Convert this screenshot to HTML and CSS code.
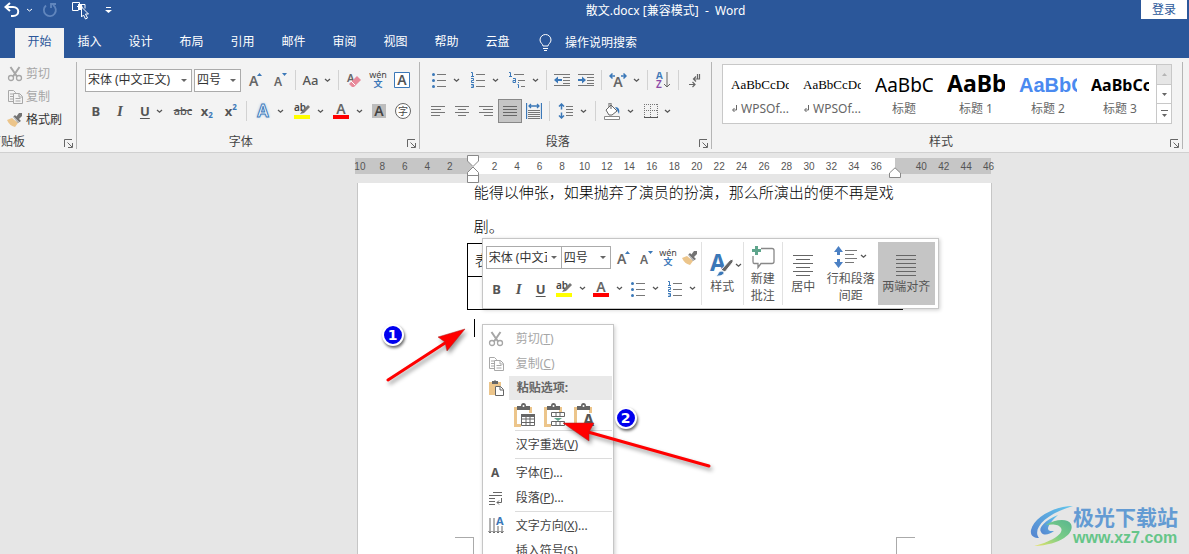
FILE: index.html
```
<!DOCTYPE html>
<html lang="zh-CN">
<head>
<meta charset="utf-8">
<title>散文.docx [兼容模式] - Word</title>
<link rel="stylesheet" href="styles.css">
</head>
<body>
<svg class="sprite" aria-hidden="true">
  <symbol id="chev" viewBox="0 0 7 5"><path d="M1 1l2.500 2.200L6 1" fill="none" stroke="#555" stroke-width="1.300"/></symbol>
  <symbol id="cut" viewBox="0 0 16 16"><path d="M3.500 1L10 10.500M12.500 1L6 10.500" stroke="#a6a6a6" stroke-width="2"/><circle cx="4" cy="12" r="2.500" fill="none" stroke="#a6a6a6" stroke-width="1.300"/><circle cx="12" cy="12" r="2.500" fill="none" stroke="#a6a6a6" stroke-width="1.300"/></symbol>
  <symbol id="copy" viewBox="0 0 16 16"><path d="M6 12.500H1.500v-11h5l2 2V5M3 5h3M3 7.500h3M3 10h3M6.500 4.500h6l3 3v7h-9zM12 4.500V8h3M8.500 9.500h5M8.500 12h5" fill="none" stroke="#a8a8a8"/></symbol>
  <symbol id="brush" viewBox="0 0 16 16"><path d="M0 8l5-2 6 5-3 4C4 14 2 12 0 8z" fill="#ecc58b"/><path d="M6 5l2-2 6 6-3 2z" fill="#737373"/><path d="M9 5l3-4h3v3l-4 4z" fill="#737373"/><path d="M6 4.500l6 6" stroke="#f3f3f3"/></symbol>
  <symbol id="grow" viewBox="0 0 16 16"><text x="1" y="14" font-size="14" font-weight="600" fill="#666">A</text><path d="M9 4l2.500-3L14 4z" fill="#3b78b8"/></symbol>
  <symbol id="shrink" viewBox="0 0 16 16"><text x="2" y="14" font-size="12" font-weight="600" fill="#666">A</text><path d="M10 1l2.500 3L15 1z" fill="#3b78b8"/></symbol>
  <symbol id="eraser" viewBox="0 0 16 16"><text x="1" y="10" font-size="11" font-weight="600" fill="#666">A</text><path d="M4 11l7-7 4 4-7 7H6l-3-3z" fill="#e8899a"/><path d="M5 9l4 4" stroke="#fff"/></symbol>
  <symbol id="wen" viewBox="0 0 18 18"><text x="9" y="7" text-anchor="middle" font-size="9" fill="#444">wén</text><text class="cjk" x="9" y="16" text-anchor="middle" font-size="9" font-weight="700" fill="#3b78b8">文</text></symbol>
  <symbol id="boxA" viewBox="0 0 16 16"><path d="M.5.5h15v15H.5z" fill="#fff" stroke="#3b78b8"/><text x="8" y="13" text-anchor="middle" font-size="14" font-weight="600" fill="#555">A</text></symbol>
  <symbol id="glowA" viewBox="0 0 16 16"><text x="8" y="14" text-anchor="middle" font-size="16" font-weight="600" fill="#fff" stroke="#a9cbed" stroke-width="3" paint-order="stroke">A</text><path d="M0 0"/></symbol>
  <symbol id="hl" viewBox="0 0 18 18"><text x="1" y="9" font-size="10" font-weight="600" fill="#444">ab</text><path d="M7 12l2-3 6-6 2 2-6 6z" fill="#777"/><path d="M1 13h16v4H1z" fill="#ff0"/></symbol>
  <symbol id="redA" viewBox="0 0 18 18"><text x="9" y="12" text-anchor="middle" font-size="14" font-weight="600" fill="#666">A</text><path d="M1 13h16v4H1z" fill="red"/></symbol>
  <symbol id="grayA" viewBox="0 0 16 16"><path d="M1 1h14v14H1z" fill="#bdbdbd"/><text x="8" y="13" text-anchor="middle" font-size="14" font-weight="600" fill="#444">A</text></symbol>
  <symbol id="circ" viewBox="0 0 16 16"><circle cx="8" cy="8" r="7.500" fill="#fff" stroke="#666"/><text class="cjk" x="8" y="12" text-anchor="middle" font-size="10" fill="#444">字</text></symbol>
  <symbol id="bul" viewBox="0 0 16 16"><g fill="#3b78b8"><circle cx="2.500" cy="2.500" r="1.500"/><circle cx="2.500" cy="8.500" r="1.500"/><circle cx="2.500" cy="14.500" r="1.500"/></g><path d="M6 2.500h9M6 8.500h9M6 14.500h9" stroke="#777"/></symbol>
  <symbol id="num" viewBox="0 0 16 16"><path d="M1 .5h1.500V4M1 4.500h3M1 6.500h2.500v2H1.500v2H4M1 12.500h2.500v3H1M1.500 14h2" fill="none" stroke="#3b78b8"/><path d="M6 2.500h9M6 8.500h9M6 14.500h9" stroke="#777"/></symbol>
  <symbol id="multi" viewBox="0 0 18 16"><path d="M1 .5h1.500V4M1 4.500h3M5 6.500h2.500v4H5v-2h2.500M9.500 12.500h1V16M10.500 10v1" fill="none" stroke="#3b78b8"/><path d="M6 2.500h10M10 8.500h7M13 14.500h4" stroke="#777"/></symbol>
  <symbol id="outd" viewBox="0 0 16 16"><path d="M0 2.500h16M9 5.500h7M9 8.500h7M9 11.500h7M0 13.500h16" stroke="#777"/><path d="M0 8l4-3.500V7h4v2H4v2.500z" fill="#3b78b8"/></symbol>
  <symbol id="ind" viewBox="0 0 16 16"><path d="M0 2.500h16M9 5.500h7M9 8.500h7M9 11.500h7M0 13.500h16" stroke="#777"/><path d="M8 8L4 4.500V7H0v2h4v2.500z" fill="#3b78b8"/></symbol>
  <symbol id="wideA" viewBox="0 0 18 16"><text x="9" y="15" text-anchor="middle" font-size="14" font-weight="600" fill="#666">A</text><path d="M1 4h5M3.500 1.500L1 4l2.500 2.500M17 4h-5M14.500 1.500L17 4l-2.500 2.500" fill="none" stroke="#3b78b8" stroke-width="1.500"/></symbol>
  <symbol id="az" viewBox="0 0 16 16"><text x="1" y="7" font-size="10" font-weight="600" fill="#3b78b8">A</text><text x="1" y="16" font-size="10" font-weight="600" fill="#8c4aa8">Z</text><path d="M12 0v15M9 12l3 3 3-3" fill="none" stroke="#666"/></symbol>
  <symbol id="para" viewBox="0 0 16 16"><path d="M13.500 2v5H8M10 4.500L7.500 7 10 9.500M11.500 2v5M3 12.500h6M6.500 10L9 12.500 6.500 15" fill="none" stroke="#666" stroke-width="1.200"/></symbol>
  <symbol id="al" viewBox="0 0 16 16"><path d="M1 3.500h14M1 6.500h10M1 9.500h14M1 12.500h9" stroke="#777"/></symbol>
  <symbol id="ac" viewBox="0 0 16 16"><path d="M1 3.500h14M4 6.500h8M1 9.500h14M4 12.500h8" stroke="#777"/></symbol>
  <symbol id="ar" viewBox="0 0 16 16"><path d="M1 3.500h14M5 6.500h10M1 9.500h14M6 12.500h9" stroke="#777"/></symbol>
  <symbol id="aj" viewBox="0 0 16 16"><path d="M1 3.500h14M1 6.500h14M1 9.500h14M1 12.500h14" stroke="#666"/></symbol>
  <symbol id="dist" viewBox="0 0 16 16"><path d="M.5 0v16M15.500 0v16M3 3h10M5 1L3 3l2 2M11 1l2 2-2 2" fill="none" stroke="#3b78b8" stroke-width="1.300"/><path d="M2 7.500h12M2 9.500h12M2 11.500h12M2 13.500h12M2 15.500h12" stroke="#777"/></symbol>
  <symbol id="lsp" viewBox="0 0 16 16"><path d="M3.500 1v5.500M1 3.500L3.500 1 6 3.500M3.500 15V9.500M1 12.500L3.500 15 6 12.500" fill="none" stroke="#3b78b8" stroke-width="1.500"/><path d="M8 3.500h7M8 6.500h7M8 9.500h7M8 12.500h7" stroke="#777"/></symbol>
  <symbol id="bucket" viewBox="0 0 18 17"><path d="M3 7l5-5 6 6-5 4H6zM8 6V0h-2v4" fill="#fff" stroke="#666"/><path d="M12 4c4 0 5 3 4 7l-2-4z" fill="#3b78b8"/><path d="M1.500 13.500h15v3h-15z" fill="#fff" stroke="#888"/></symbol>
  <symbol id="bord" viewBox="0 0 14 14"><path d="M0 .5h14M0 6.500h14M.5 0v13M6.500 0v13M13.500 0v13" stroke="#777" stroke-dasharray="1 1"/><path d="M0 13.500h14" stroke="#555"/></symbol>
  <symbol id="launch" viewBox="0 0 9 9"><path d="M.5 8V.5H8M3.500 3.500L8 8M8.500 4v4.500H4" fill="none" stroke="#666"/></symbol>
  <symbol id="clip" viewBox="0 0 24 24"><path d="M2 4h18v6h-3V7H5v14h4v3H2z" fill="#ecc58b"/><path d="M5 7V3h4q0-3 2.500-3T14 3h4v4z" fill="#666"/><circle cx="11.500" cy="3" r="1" fill="#fff"/></symbol>
</svg>

<header class="titlebar">
  <div class="quick">
    <button aria-label="撤销"><svg width="16" height="16" viewBox="0 0 16 16"><path d="M6 1L1.500 5 6 9M2 5h7c7 0 7 9 0 9H7" fill="none" stroke="#fff" stroke-width="2"/></svg></button>
    <button class="q-chev" aria-label="撤销选项"><svg width="7" height="5" viewBox="0 0 7 5"><path d="M1 1l2.500 2L6 1" fill="none" stroke="#fff"/></svg></button>
    <button class="q-redo" aria-label="重复"><svg width="16" height="16" viewBox="0 0 16 16"><path d="M4 3.500a6 6 0 1 0 7-.5M9 6V2h5" fill="none" stroke="#6186bd" stroke-width="1.800"/></svg></button>
    <button class="q-select" aria-label="选择对象"><svg width="18" height="18" viewBox="0 0 18 18"><path d="M7.500 9.500h-6v-8h7V5M6 5.500h5V9M8 3.500h6v4" fill="none" stroke="#fff"/><path d="M7 3h4v6H7z" fill="#fff"/><path d="M10.500 6v10l2-2 2 4 2-1-2-4h3z" fill="#2b579a" stroke="#fff"/></svg></button>
    <button aria-label="自定义快速访问工具栏"><svg width="7" height="8" viewBox="0 0 7 8"><path d="M1 1.500h5" stroke="#fff"/><path d="M0 4h7L3.500 7z" fill="#fff"/></svg></button>
  </div>
  <h1>散文.docx [兼容模式]&nbsp; -&nbsp; Word</h1>
  <button class="login">登录</button>
</header>

<nav class="tabs">
  <a href="#" class="active">开始</a><a href="#">插入</a><a href="#">设计</a><a href="#">布局</a><a href="#">引用</a><a href="#">邮件</a><a href="#">审阅</a><a href="#">视图</a><a href="#">帮助</a><a href="#">云盘</a>
  <button class="tell"><svg width="13" height="18" viewBox="0 0 13 18"><path d="M4 12c0-2-3-3-3-6a5.500 5.500 0 0 1 11 0c0 3-3 4-3 6zM4 14.500h5M5 16.500h3" fill="none" stroke="#fff"/></svg>操作说明搜索</button>
</nav>

<section class="ribbon">
  <div class="group clipboard">
    <div class="group-body">
      <button class="off"><svg width="16" height="16"><use href="#cut"/></svg>剪切</button>
      <button class="off"><svg width="16" height="16"><use href="#copy"/></svg>复制</button>
      <button><svg width="16" height="16"><use href="#brush"/></svg>格式刷</button>
    </div>
    <div class="group-foot"><span>剪贴板</span><button aria-label="剪贴板设置"><svg width="9" height="9"><use href="#launch"/></svg></button></div>
  </div>

  <div class="group font">
    <div class="group-body">
      <div class="row">
        <span class="combo name"><select aria-label="字体"><option>宋体 (中文正文)</option></select></span>
        <span class="combo size"><select aria-label="字号"><option>四号</option></select></span>
        <button class="ib" aria-label="增大字号"><svg width="16" height="16"><use href="#grow"/></svg></button>
        <button class="ib" aria-label="减小字号"><svg width="16" height="16"><use href="#shrink"/></svg></button>
        <i class="sep"></i>
        <button class="ib split case" aria-label="更改大小写"><span class="glyph thin">Aa</span><svg width="7" height="5"><use href="#chev"/></svg></button>
        <i class="sep"></i>
        <button class="ib" aria-label="清除格式"><svg width="16" height="16"><use href="#eraser"/></svg></button>
        <button class="ib" aria-label="拼音指南"><svg width="18" height="18"><use href="#wen"/></svg></button>
        <button class="ib" aria-label="字符边框"><svg width="16" height="16"><use href="#boxA"/></svg></button>
      </div>
      <div class="row">
        <button class="ib glyph">B</button>
        <button class="ib glyph it">I</button>
        <button class="ib split" aria-label="下划线"><span class="glyph un">U</span><svg width="7" height="5"><use href="#chev"/></svg></button>
        <button class="ib glyph st">abc</button>
        <button class="ib glyph">x<sub>2</sub></button>
        <button class="ib glyph">x<sup>2</sup></button>
        <i class="sep"></i>
        <button class="ib split" aria-label="文本效果"><span class="glow">A</span><svg width="7" height="5"><use href="#chev"/></svg></button>
        <button class="ib split" aria-label="突出显示"><svg width="18" height="18"><use href="#hl"/></svg><svg width="7" height="5"><use href="#chev"/></svg></button>
        <button class="ib split" aria-label="字体颜色"><svg width="18" height="18"><use href="#redA"/></svg><svg width="7" height="5"><use href="#chev"/></svg></button>
        <button class="ib" aria-label="字符底纹"><svg width="16" height="16"><use href="#grayA"/></svg></button>
        <button class="ib" aria-label="带圈字符"><svg width="16" height="16"><use href="#circ"/></svg></button>
      </div>
    </div>
    <div class="group-foot"><span>字体</span><button aria-label="字体设置"><svg width="9" height="9"><use href="#launch"/></svg></button></div>
  </div>

  <div class="group paragraph">
    <div class="group-body">
      <div class="row">
        <button class="ib split" aria-label="项目符号"><svg width="16" height="16"><use href="#bul"/></svg><svg width="7" height="5"><use href="#chev"/></svg></button>
        <button class="ib split" aria-label="编号"><svg width="16" height="16"><use href="#num"/></svg><svg width="7" height="5"><use href="#chev"/></svg></button>
        <button class="ib split" aria-label="多级列表"><svg width="18" height="16"><use href="#multi"/></svg><svg width="7" height="5"><use href="#chev"/></svg></button>
        <i class="sep"></i>
        <button class="ib" aria-label="减少缩进量"><svg width="16" height="16"><use href="#outd"/></svg></button>
        <button class="ib" aria-label="增加缩进量"><svg width="16" height="16"><use href="#ind"/></svg></button>
        <i class="sep"></i>
        <button class="ib split" aria-label="中文版式"><svg width="18" height="16"><use href="#wideA"/></svg><svg width="7" height="5"><use href="#chev"/></svg></button>
        <i class="sep"></i>
        <button class="ib" aria-label="排序"><svg width="16" height="16"><use href="#az"/></svg></button>
        <i class="sep"></i>
        <button class="ib" aria-label="显示编辑标记"><svg width="16" height="16"><use href="#para"/></svg></button>
      </div>
      <div class="row">
        <button class="ib" aria-label="左对齐"><svg width="16" height="16"><use href="#al"/></svg></button>
        <button class="ib" aria-label="居中"><svg width="16" height="16"><use href="#ac"/></svg></button>
        <button class="ib" aria-label="右对齐"><svg width="16" height="16"><use href="#ar"/></svg></button>
        <button class="ib on" aria-label="两端对齐"><svg width="16" height="16"><use href="#aj"/></svg></button>
        <button class="ib" aria-label="分散对齐"><svg width="16" height="16"><use href="#dist"/></svg></button>
        <i class="sep"></i>
        <button class="ib split" aria-label="行和段落间距"><svg width="16" height="16"><use href="#lsp"/></svg><svg width="7" height="5"><use href="#chev"/></svg></button>
        <i class="sep"></i>
        <button class="ib split" aria-label="底纹"><svg width="18" height="17"><use href="#bucket"/></svg><svg width="7" height="5"><use href="#chev"/></svg></button>
        <button class="ib split" aria-label="边框"><svg width="14" height="14"><use href="#bord"/></svg><svg width="7" height="5"><use href="#chev"/></svg></button>
      </div>
    </div>
    <div class="group-foot"><span>段落</span><button aria-label="段落设置"><svg width="9" height="9"><use href="#launch"/></svg></button></div>
  </div>

  <div class="group styles">
    <div class="group-body">
      <div class="gallery">
        <button><span class="pv serif">AaBbCcDd</span><small><svg width="7" height="8" viewBox="0 0 7 8"><path d="M5.500 0v5H2M3.500 3L1.500 5l2 2" fill="none" stroke="#666"/></svg> WPSOf...</small></button>
        <button><span class="pv serif">AaBbCcDd</span><small><svg width="7" height="8" viewBox="0 0 7 8"><path d="M5.500 0v5H2M3.500 3L1.500 5l2 2" fill="none" stroke="#666"/></svg> WPSOf...</small></button>
        <button><span class="pv title">AaBbC</span><small>标题</small></button>
        <button><span class="pv h1">AaBb</span><small>标题 1</small></button>
        <button><span class="pv h2">AaBbC</span><small>标题 2</small></button>
        <button><span class="pv h3">AaBbCc</span><small>标题 3</small></button>
        <div class="scroller">
          <button class="dim" aria-label="上一行"><svg width="5" height="3" viewBox="0 0 5 3"><path d="M0 3h5L2.500 0z" fill="#b5b5b5"/></svg></button>
          <button aria-label="下一行"><svg width="5" height="3" viewBox="0 0 5 3"><path d="M0 0h5L2.500 3z" fill="#666"/></svg></button>
          <button aria-label="其他样式"><svg width="7" height="7" viewBox="0 0 7 7"><path d="M0 .5h7" stroke="#666"/><path d="M1 4h5L3.500 7z" fill="#666"/></svg></button>
        </div>
      </div>
    </div>
    <div class="group-foot"><span>样式</span><button aria-label="样式设置"><svg width="9" height="9"><use href="#launch"/></svg></button></div>
  </div>
</section>

<main class="workspace">
  <div class="sheet">
    <div class="ruler">
      <div class="ruler-nums"><span>10</span><span>8</span><span>6</span><span>4</span><span>2</span><span></span><span>2</span><span>4</span><span>6</span><span>8</span><span>10</span><span>12</span><span>14</span><span>16</span><span>18</span><span>20</span><span>22</span><span>24</span><span>26</span><span>28</span><span>30</span><span>32</span><span>34</span><span>36</span><span></span><span>40</span><span>42</span><span>44</span><span>46</span></div>
      <svg class="indent-l" width="12" height="28" viewBox="0 0 12 28"><path d="M.5.500h11V6L6 11.500.5 6zM.5 27.500v-10L6 12l5.500 5.500v10zM.5 20.500h11" fill="#fff" stroke="#888"/></svg>
      <svg class="indent-r" width="12" height="11" viewBox="0 0 12 11"><path d="M.5 10.500V6L6 .8 11.500 6v4.500z" fill="#fff" stroke="#888"/></svg>
    </div>
    <article class="page">
      <p>能得以伸张，如果抛弃了演员的扮演，那么所演出的便不再是戏剧。</p>
      <table><tr><td>表</td><td></td><td></td><td></td></tr><tr><td></td><td></td><td></td><td></td></tr></table>
      <div class="caret"></div>
      <i class="crop left"></i><i class="crop right"></i>
    </article>

    <div class="mini" role="toolbar">
      <div class="mini-tools">
        <div class="mini-row">
          <span class="combo m-name"><select aria-label="字体"><option>宋体 (中文正文)</option></select></span>
          <span class="combo m-size"><select aria-label="字号"><option>四号</option></select></span>
          <button class="mb" aria-label="增大字号"><svg width="16" height="16"><use href="#grow"/></svg></button>
          <button class="mb" aria-label="减小字号"><svg width="16" height="16"><use href="#shrink"/></svg></button>
          <button class="mb" aria-label="拼音指南"><svg width="18" height="18"><use href="#wen"/></svg></button>
          <button class="mb" aria-label="格式刷"><svg width="16" height="16"><use href="#brush"/></svg></button>
        </div>
        <div class="mini-row">
          <button class="mb glyph">B</button>
          <button class="mb glyph it">I</button>
          <button class="mb glyph un">U</button>
          <button class="mb wide" aria-label="突出显示"><svg width="18" height="18"><use href="#hl"/></svg><svg width="7" height="5"><use href="#chev"/></svg></button>
          <button class="mb wide" aria-label="字体颜色"><svg width="18" height="18"><use href="#redA"/></svg><svg width="7" height="5"><use href="#chev"/></svg></button>
          <button class="mb wide" aria-label="项目符号"><svg width="16" height="16"><use href="#bul"/></svg><svg width="7" height="5"><use href="#chev"/></svg></button>
          <button class="mb wide" aria-label="编号"><svg width="16" height="16"><use href="#num"/></svg><svg width="7" height="5"><use href="#chev"/></svg></button>
        </div>
      </div>
      <button class="big w-style"><span class="pic"><svg width="23" height="24" viewBox="0 0 23 24"><text x="0" y="18" font-size="23" font-weight="700" fill="#3b78b8">A</text><path d="M11 17L20 7l3-1v3l-8 10z" fill="#666" stroke="#fff"/><path d="M5 23c4 0 2-5 7-5 4 1 2 6-7 5z" fill="#3b78b8" stroke="#fff"/></svg><svg width="7" height="5"><use href="#chev"/></svg></span><span>样式</span></button>
      <button class="big w-note"><span class="pic"><svg width="24" height="24" viewBox="0 0 24 24"><path d="M10 3.500h11q2 0 2 2v11q0 2-2 2H10l-3 4v-4H3q-1 0-1-2V11" fill="none" stroke="#888" stroke-width="1.300"/><path d="M4 1h3v3h3v3H7v3H4V7H1V4h3z" fill="#5fa58c"/></svg></span><span>新建<br>批注</span></button>
      <button class="big w-center"><span class="pic"><svg width="22" height="24" viewBox="0 0 22 24"><path d="M1 2.500h20M4 6.500h14M1 10.500h20M4 14.500h14M1 18.500h20M4 22.500h14" stroke="#666"/></svg></span><span>居中</span></button>
      <button class="big w-space"><span class="pic"><svg width="24" height="24" viewBox="0 0 24 24"><path d="M0 7l4.500-6L9 7H6v3H3V7zM0 17l4.500 6L9 17H6v-3H3v3z" fill="#4b80c4"/><path d="M11 5.500h12M11 9.500h9M11 13.500h12M11 17.500h9" stroke="#777"/></svg><svg width="7" height="5"><use href="#chev"/></svg></span><span>行和段落<br>间距</span></button>
      <button class="big w-just"><span class="pic"><svg width="22" height="24" viewBox="0 0 22 24"><path d="M1 2.500h20M1 6.500h20M1 10.500h20M1 14.500h20M1 18.500h20M1 22.500h20" stroke="#666"/></svg></span><span>两端对齐</span></button>
    </div>

    <div class="menu" role="menu">
      <button class="off"><svg width="16" height="16"><use href="#cut"/></svg><span>剪切(<u>T</u>)</span></button>
      <button class="off"><svg width="16" height="16"><use href="#copy"/></svg><span>复制(<u>C</u>)</span></button>
      <div class="menu-head"><svg width="18" height="18" viewBox="0 0 18 18"><path d="M2 3h12v4H8v9H2z" fill="#ecc58b"/><path d="M5 5V2h2l1-1 1 1h2v3z" fill="#666"/><path d="M8.500 7.500h5l3 3v6h-8zM13 7.500V11h3" fill="#fff" stroke="#666"/></svg><span>粘贴选项:</span></div>
      <div class="paste">
        <button aria-label="嵌套表"><svg width="24" height="24"><use href="#clip"/><path d="M9.500 11.500h13v11h-13zM9.500 16h13M9.500 19.500h13M14 14v8M18 14v8" fill="#fff" stroke="#666"/><path d="M9 11h14v3H9z" fill="#666"/></svg></button>
        <button aria-label="合并表格"><svg width="24" height="24"><use href="#clip"/><path d="M9.500 9.500h13v4h-13zM14 9.500v4M18 9.500v4M9.500 18.500h13v4h-13zM14 18.500v4M18 18.500v4" fill="#fff" stroke="#666"/><path d="M12 15h8l-4 3z" fill="#5fa58c"/></svg></button>
        <button aria-label="只保留文本"><svg width="24" height="24"><use href="#clip"/><path d="M10 10h13v14H10z" fill="#fff"/><text x="11" y="23" font-size="16" font-weight="700" fill="#555">A</text></svg></button>
      </div>
      <hr>
      <button><i></i><span>汉字重选(<u>V</u>)</span></button>
      <hr>
      <button><svg width="16" height="16"><text x="3" y="12" font-size="12" font-weight="700" fill="#555">A</text></svg><span>字体(<u>F</u>)...</span></button>
      <button><svg width="16" height="16" viewBox="0 0 16 16"><path d="M5 2.500h9M1 5.500h13M1 8.500h6M1 11.500h6M1 14.500h6M13.500 8v4.500H9M11 10.500l-2 2 2 2" fill="none" stroke="#666"/></svg><span>段落(<u>P</u>)...</span></button>
      <hr>
      <button><svg width="16" height="18" viewBox="0 0 16 18"><path d="M2 1v15M6 1v15M10 9v7M14 9v7M.5 14L2 16l1.500-2M4.500 14L6 16l1.500-2M8.500 14l1.500 2 1.500-2M12.500 14l1.500 2 1.500-2" fill="none" stroke="#666"/><text x="8" y="8" font-size="11" font-weight="700" fill="#3b78b8">A</text></svg><span>文字方向(<u>X</u>)...</span></button>
      <button><i></i><span>插入符号(<u>S</u>)</span></button>
    </div>

    <svg class="arrow a1" width="90" height="66" viewBox="0 0 90 66"><path d="M5 56L62 19" stroke="red" stroke-width="3" stroke-linecap="round"/><path d="M82 5L55 13l7 5 2 9z" fill="red" stroke="#a22" stroke-width=".5"/></svg>
    <svg class="arrow a2" width="156" height="56" viewBox="0 0 156 56"><path d="M149 47L28 13" stroke="red" stroke-width="3" stroke-linecap="round"/><path d="M3 4l31 0-5 9 0 9z" fill="red" stroke="#a22" stroke-width=".5"/></svg>
    <b class="badge b1">1</b>
    <b class="badge b2">2</b>
  </div>

  <div class="mark">
    <svg width="42" height="42" viewBox="0 0 42 42">
      <defs><linearGradient id="sky" x1="0" y1="1" x2="1" y2="0"><stop stop-color="#5584cf"/><stop offset="1" stop-color="#62c6ec"/></linearGradient><linearGradient id="leaf" x1="0" y1="1" x2="1" y2="0"><stop stop-color="#e9e46a"/><stop offset=".5" stop-color="#7bcd86"/><stop offset="1" stop-color="#58b58f"/></linearGradient></defs>
      <path d="M42 1C24 1 3 12 0 25c-1 6 3 8 8 8C1 24 14 9 42 1z" fill="url(#sky)"/>
      <path d="M27 10C14 15 7 23 10 27c2 4 8 3 13-1-8 1-9-4 4-16z" fill="url(#sky)"/>
      <path d="M15 20c9-6 22-7 25-1 4 9-10 21-37 22 20-5 30-13 27-18-2-4-9-4-15-3z" fill="url(#leaf)"/>
    </svg>
    <div><strong>极光下载站</strong><span>www.xz7.com</span></div>
  </div>
</main>
</body>
</html>
```
FILE: styles.css
```
* { box-sizing: border-box; }
body {
  margin: 0;
  height: 100vh;
  display: flex;
  flex-direction: column;
  overflow: hidden;
  background: #e6e6e6;
  color: #333;
  font: 12px/16px "Noto Sans", "Noto Sans CJK SC", sans-serif;
}
button, select {
  margin: 0;
  padding: 0;
  border: 0;
  background: none;
  color: inherit;
  font: inherit;
}
svg { flex: none; overflow: visible; }
svg text { font-family: "Noto Sans", sans-serif; }
svg text.cjk { font-family: "Noto Sans CJK SC", sans-serif; }
.sprite { display: none; }

/* Title bar and tabs */
.titlebar {
  height: 28px;
  flex: none;
  display: grid;
  grid-template-columns: 1fr auto 1fr;
  align-items: start;
  padding-right: 2px;
  background: #2b579a;
  color: #fff;
}
.quick { display: flex; align-items: center; height: 20px; padding-left: 4px; }
.quick button { display: flex; }
.quick .q-chev { margin-left: 6px; }
.quick .q-redo { margin-left: 9px; }
.quick .q-select { margin: 0 16px 0 13px; }
.titlebar h1 { margin: 0 0 0 144px; font-size: 12px; font-weight: 400; line-height: 22px; }
.login { justify-self: end; width: 46px; height: 19px; background: #fff; color: #2b579a; }
.tabs { display: flex; height: 30px; flex: none; padding-left: 15px; background: #2b579a; }
.tabs a { width: 51px; line-height: 28px; text-align: center; color: #fff; text-decoration: none; }
.tabs .active { width: 49px; background: #f3f3f3; color: #2b579a; }
.tell { display: flex; align-items: center; gap: 13px; margin-left: 16px; color: #fff; }

/* Ribbon */
.ribbon {
  display: flex;
  flex: none;
  height: 95px;
  padding: 4px 6px 3px 0;
  background: #f3f3f3;
  border-bottom: 1px solid #d0d0d0;
}
.group { display: flex; flex-direction: column; border-right: 1px solid #b5b5b5; }
.group-body { flex: 1; }
.group-foot { display: flex; height: 15px; color: #444; }
.group-foot span { flex: 1; text-align: center; }
.group-foot button { display: flex; align-items: end; padding: 0 3px 1px 0; }
.clipboard { width: 77px; }
.clipboard .group-body { display: flex; flex-direction: column; padding: 0 0 0 7px; }
.clipboard .group-body button { display: flex; align-items: center; gap: 3px; height: 23px; }
.off { color: #a6a6a6; }
.clipboard .group-foot span { text-align: left; margin-left: -11px; }
.font { width: 344px; padding-left: 7px; }
.font .group-foot span, .paragraph .group-foot span, .styles .group-foot span { margin-right: 10px; }
.paragraph { width: 292px; padding-left: 6px; }
.styles { flex: 1; padding-left: 10px; }
.row { display: flex; align-items: center; height: 32px; padding-top: 4px; }
.row + .row { padding-top: 2px; }
.ib { display: flex; align-items: center; justify-content: center; width: 24px; height: 24px; }
.ib.split { width: 39px; gap: 6px; }
.ib.case { width: 36px; }
.ib.on { background: #c5c5c5; border: 1px solid #888; }
.sep { width: 1px; height: 20px; margin: 0 3px; background: #d2d2d2; }
.glyph { color: #555; font-size: 13px; font-weight: 700; }
.glyph.thin { font-size: 13px; font-weight: 500; }
.glyph.it { font-family: "Liberation Serif", serif; font-style: italic; font-size: 15px; }
.glyph.un { text-decoration: underline; text-underline-offset: 2px; }
.glyph.st { font-size: 11px; font-weight: 500; text-decoration: line-through; }
.glyph sub, .glyph sup { color: #3b78b8; font-size: 8px; line-height: 8px; }
.glyph sub { padding-top: 8px; }
.glyph sup { padding-bottom: 8px; }
.glow { width: 16px; color: #fff; font-size: 17px; font-weight: 600; text-align: center; -webkit-text-stroke: 1px #3f7dbc; text-shadow: 0 0 3px #7fb2e5; }
.combo { position: relative; height: 23px; border: 1px solid #ababab; background: #fff; }
.combo select { width: 100%; height: 100%; padding: 0 14px 0 2px; appearance: none; overflow: hidden; }
.combo::after {
  content: "";
  position: absolute;
  right: 4px;
  top: 9px;
  border: 3px solid transparent;
  border-top-color: #666;
  border-bottom: 0;
}
.combo.name { width: 107px; margin: 0 2px 0 1px; }
.combo.size { width: 47px; margin-right: 3px; }

/* Style gallery */
.gallery { display: flex; height: 60px; margin: 2px 10px 0 0; padding-left: 1px; border: 1px solid #c8c8c8; background: #fff; }
.gallery > button { display: flex; flex-direction: column; align-items: center; width: 72px; padding-top: 6px; }
.pv { display: block; width: 58px; height: 28px; overflow: hidden; white-space: nowrap; text-align: left; color: #000; line-height: 28px; }
.pv.serif { font-family: "Liberation Serif", serif; font-size: 13px; }
.pv.title { font-size: 19px; }
.pv.h1 { font-size: 23px; font-weight: 700; line-height: 24px; }
.pv.h2 { font: 700 20px/28px "Liberation Sans", sans-serif; color: #4a8af0; }
.pv.h3 { font-size: 16px; font-weight: 700; line-height: 28px; }
.gallery small { font-size: 12px; line-height: 20px; color: #666; white-space: nowrap; }
.scroller { display: flex; flex-direction: column; width: 15px; margin-left: auto; border-left: 1px solid #c8c8c8; }
.scroller button { flex: 1; display: flex; align-items: center; justify-content: center; }
.scroller button + button { border-top: 1px solid #c8c8c8; }
.scroller .dim { background: #e6e6e6; }

/* Document area */
.workspace { position: relative; flex: 1; min-height: 0; display: flex; padding: 5px 0 0 30%; }
.sheet { position: relative; display: flex; flex-direction: column; width: 635px; }
.ruler {
  position: relative;
  height: 16px;
  flex: none;
  margin: 0 1px 9px -2px;
  background: linear-gradient(90deg, #c6c6c6 117px, #fff 117px 540px, #c6c6c6 540px);
}
.ruler-nums { display: flex; margin: 0 -9px 0 -6px; font: 10px/17px "Liberation Sans", sans-serif; color: #555; }
.ruler-nums span { flex: 1 1 0; text-align: center; }
.indent-l { position: absolute; left: 112px; top: -3px; }
.indent-r { position: absolute; left: 534px; top: 9px; }
.page { position: relative; flex: 1; padding: 0 88px 0 109px; background: #fff; border: solid #c6c6c6; border-width: 0 1px; }
.page p {
  margin: -8px 0 0;
  padding-left: 7px;
  font: 300 15px/34px "Noto Sans CJK SC", sans-serif;
  color: #000;
}
.page table { width: 436px; table-layout: fixed; border-collapse: collapse; }
.page td { height: 33px; padding: 0 7px; border: 1px solid #000; font: 300 15px/20px "Noto Sans CJK SC", sans-serif; color: #000; }
.caret { width: 1px; height: 18px; margin: 9px 0 0 7px; background: #000; }
.crop { position: absolute; top: 354px; width: 19px; height: 40px; border: 0 solid #aaa; border-top-width: 1px; }
.crop.left { left: 97px; border-right-width: 1px; }
.crop.right { left: 538px; border-left-width: 1px; }

/* Floating toolbar */
.mini {
  position: absolute;
  left: 125px;
  top: 80px;
  display: flex;
  height: 71px;
  padding: 3px;
  background: #fff;
  border: 1px solid #c6c6c6;
  box-shadow: 1px 1px 4px #0003;
}
.mini-tools { width: 215px; }
.mini-row { display: flex; align-items: center; height: 31px; }
.mb { display: flex; align-items: center; justify-content: center; width: 22px; height: 24px; }
.mb.wide { width: 37px; gap: 6px; }
.combo.m-name { width: 76px; }
.combo.m-size { width: 50px; margin-left: -1px; margin-right: 2px; }
.big { display: flex; flex-direction: column; align-items: center; justify-content: center; color: #555; line-height: 17px; }
.big .pic { display: flex; align-items: center; gap: 2px; height: 26px; }
.w-style { width: 42px; border-left: 1px solid #e1e1e1; }
.w-style .pic { padding-left: 7px; }
.w-note { width: 40px; border: solid #e1e1e1; border-width: 0 1px; }
.w-center { width: 41px; }
.w-space { width: 54px; }
.w-just { width: 57px; background: #c5c5c5; }

/* Context menu */
.menu {
  position: absolute;
  left: 125px;
  top: 166px;
  display: flex;
  flex-direction: column;
  width: 132px;
  padding: 1px 1px 4px;
  background: #fff;
  border: 1px solid #c6c6c6;
  box-shadow: 1px 2px 4px #0003;
  color: #444;
}
.menu > button, .menu-head { display: grid; grid-template-columns: 25px 1fr; align-items: center; justify-items: start; height: 25px; text-align: left; }
.menu > button > :first-child, .menu-head > svg { justify-self: center; }
.menu > button span { padding-left: 7px; }
.menu > .off { color: #a6a6a6; }
.menu-head { height: 24px; }
.menu-head span { width: 100%; padding-left: 8px; line-height: 24px; background: #e9e9e9; font-weight: 700; color: #666; }
.paste { display: flex; gap: 6px; height: 29px; padding: 3px 0 0 28px; }
.paste button { display: flex; }
.menu hr { width: 97px; height: 1px; margin: 1px 0 1px auto; border: 0; background: #dcdcdc; }

/* Callouts */
.arrow { position: absolute; filter: drop-shadow(2px 3px 2px #0006); }
.a1 { left: 26px; top: 166px; }
.a2 { left: 203px; top: 261px; }
.badge {
  position: absolute;
  width: 22px;
  height: 22px;
  border: 2px solid #fff;
  border-radius: 50%;
  background: #00e;
  box-shadow: 1px 2px 3px #0009;
  color: #fff;
  font: 700 14px/18px "DejaVu Sans", sans-serif;
  text-align: center;
}
.b1 { left: 25px; top: 166px; }
.b2 { left: 258px; top: 249px; }

/* Site mark */
.mark { position: absolute; right: 11px; bottom: 6px; display: flex; align-items: center; }
.mark div { display: flex; flex-direction: column; }
.mark strong { font: 700 21px/24px "Noto Sans CJK SC", sans-serif; color: #639bd3; }
.mark span { font: 700 16px/20px "Liberation Sans", sans-serif; color: #65c588; }
```
